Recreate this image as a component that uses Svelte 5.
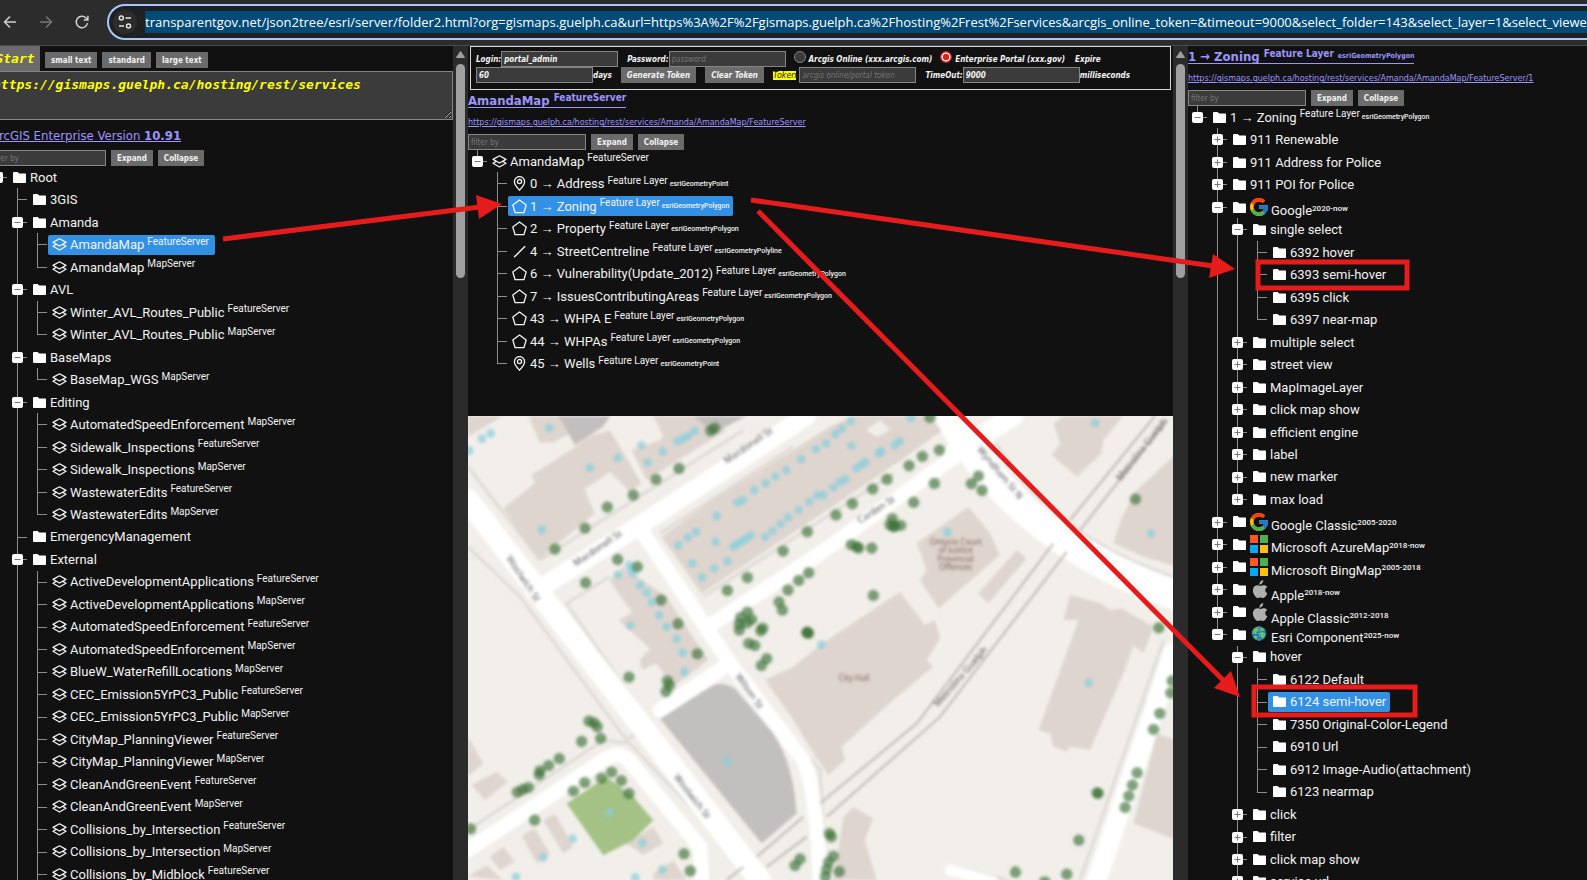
<script>
  const fs = (name) => ({ icon: 'layers', name, sup: 'FeatureServer' });
  const ms = (name) => ({ icon: 'layers', name, sup: 'MapServer' });
  const both = (name) => [fs(name), ms(name)];
  const folder = (name, children = null, closed = false, extra = {}) => ({ icon: 'folder', name, children, closed, ...extra });
  const shut = (name, extra = {}) => folder(name, null, true, extra);
  const layer = (icon, name, kind) => ({ icon, name, sup: 'Feature Layer', tiny: 'esriGeometry' + kind });

  const services = [
    folder('Root', [
      folder('3GIS'),
      folder('Amanda', [{ ...fs('AmandaMap'), selected: true }, ms('AmandaMap')]),
      folder('AVL', both('Winter_AVL_Routes_Public')),
      folder('BaseMaps', [ms('BaseMap_WGS')]),
      folder('Editing', [ms('AutomatedSpeedEnforcement'), ...both('Sidewalk_Inspections'), ...both('WastewaterEdits')]),
      folder('EmergencyManagement'),
      folder('External', [
        ...both('ActiveDevelopmentApplications'),
        ...both('AutomatedSpeedEnforcement'),
        ms('BlueW_WaterRefillLocations'),
        ...both('CEC_Emission5YrPC3_Public'),
        ...both('CityMap_PlanningViewer'),
        ...both('CleanAndGreenEvent'),
        ...both('Collisions_by_Intersection'),
        ...both('Collisions_by_Midblock')
      ]),
      shut('Planning')
    ])
  ];

  const layers = [
    {
      ...fs('AmandaMap'),
      children: [
        layer('pin', '0 → Address', 'Point'),
        { ...layer('polygon', '1 → Zoning', 'Polygon'), selected: true },
        layer('polygon', '2 → Property', 'Polygon'),
        layer('line', '4 → StreetCentreline', 'Polyline'),
        layer('polygon', '6 → Vulnerability(Update_2012)', 'Polygon'),
        layer('polygon', '7 → IssuesContributingAreas', 'Polygon'),
        layer('polygon', '43 → WHPA E', 'Polygon'),
        layer('polygon', '44 → WHPAs', 'Polygon'),
        layer('pin', '45 → Wells', 'Point')
      ]
    }
  ];

  const viewers = [
    folder('1 → Zoning', [
      shut('911 Renewable'),
      shut('911 Address for Police'),
      shut('911 POI for Police'),
      folder('Google', [
        folder('single select', [folder('6392 hover'), folder('6393 semi-hover'), folder('6395 click'), folder('6397 near-map')]),
        ...['multiple select', 'street view', 'MapImageLayer', 'click map show', 'efficient engine', 'label', 'new marker', 'max load'].map((n) => shut(n))
      ], false, { logo: 'google', years: '2020-now' }),
      shut('Google Classic', { logo: 'google', years: '2005-2020' }),
      shut('Microsoft AzureMap', { logo: 'microsoft', years: '2018-now' }),
      shut('Microsoft BingMap', { logo: 'microsoft', years: '2005-2018' }),
      shut('Apple', { logo: 'apple', years: '2018-now' }),
      shut('Apple Classic', { logo: 'apple', years: '2012-2018' }),
      folder('Esri Component', [
        folder('hover', [
          folder('6122 Default'),
          folder('6124 semi-hover', null, false, { selected: true }),
          folder('7350 Original-Color-Legend'),
          folder('6910 Url'),
          folder('6912 Image-Audio(attachment)'),
          folder('6123 nearmap')
        ]),
        shut('click'), shut('filter'), shut('click map show'), shut('service url')
      ], false, { logo: 'esri', years: '2025-now' })
    ], false, { sup: 'Feature Layer', tiny: 'esriGeometryPolygon' })
  ];

  let where = $state('enterprise');

  const trees = [
    [285,447],[375,384],[442,321],[520,285],[588,238],[657,205],[752,92],[764,84],[377,548],[473,478],[532,500],[603,600],[654,671],[712,761],[507,831],
    [622,842],[628,856],[618,874],[387,963],[402,968],[412,980],[422,1015],[365,1024],[298,1075],[266,1096],[240,1112],[238,1124],[205,1162],[188,1168],[172,1176],
    [340,1173],[374,1147],[424,1134],[455,1116],[484,1142],[507,1180],[224,1260],[32,1286],[672,1361],[691,1412],[1020,1376],[1005,1396],[802,571],[862,532],
    [969,453],[1042,395],[1046,518],[1016,541],[984,570],[957,606],[967,630],[862,636],[842,652],[875,658],[838,672],[838,690],[862,668],[908,684],[902,692],
    [866,730],[884,736],[920,776],[904,796],[1040,698],[1046,700],[1042,696],[1128,345],[1177,311],[1238,267],[1281,238],[1347,197],[1387,169],[1438,150],[1410,52],
    [1361,307],[1423,250],[1297,356],[1290,374],[1304,378],[1322,376],[1300,380],[1174,434],[1190,440],[1196,444],[1235,444],[1534,251],[1555,228],[1566,271],
    [1240,586],[2026,297],[2096,683],[2132,878],[2136,842],[2099,940],[2080,988],[2031,1118],[2017,1155],[2006,1188],[1995,1222],[1911,1178],[1914,1180],
    [1856,1320],[1820,1422],[1666,1416],[1754,1445],[1108,1300],[1114,1310],[1120,1368],[1106,1386],[1100,1408],[1096,1430],[1138,1414]
  ];
  const marks = [
    [66,116],[92,100],[28,152],[268,84],[390,203],[474,174],[563,187],[544,136],[608,154],[652,124],[668,116],[684,108],[704,93],[246,389],[474,524],[508,495],
    [514,508],[520,520],[540,556],[560,578],[576,606],[598,646],[620,680],[650,716],[668,758],[673,815],[511,676],[655,435],[683,412],[708,396],[770,348],[767,425],
    [697,489],[726,532],[762,505],[802,484],[820,440],[832,432],[846,424],[858,416],[872,406],[916,410],[938,392],[962,372],[984,352],[1016,330],[1048,305],[1072,286],
    [832,308],[848,300],[882,270],[917,250],[946,230],[978,210],[1023,177],[1068,148],[1098,130],[1126,102],[1146,86],[1172,64],[1174,137],[1090,284],[1120,262],
    [1140,246],[1156,238],[1190,204],[1204,194],[1216,186],[1256,160],[1264,154],[1304,136],[1318,124],[1462,397],[1905,68],[2072,400],[1886,848],[1084,734],
    [802,1084],[447,1238],[338,1316],[547,1328],[250,1372],[168,1430],[607,1408],[526,1432],[1352,54]
  ];
</script>

{#snippet glyph(name)}
  {#if name === 'folder'}
    <svg class="ico" viewBox="0 0 15 15" aria-hidden="true"><path d="M1 3.2C1 2.3 1.5 2 2.2 2H5.6L7.2 3.6H13c.7 0 1 .4 1 1V12c0 .7-.4 1-1 1H2.2C1.5 13 1 12.600 1 12Z" fill="#fff" /></svg>
  {:else if name === 'layers'}
    <svg class="ico" viewBox="0 0 15 15" aria-hidden="true"><path d="M7.500 1.800 14 5.400 7.500 9 1 5.400Z M3.800 7.600 1 9.300 7.500 13 14 9.300 11.200 7.600" fill="none" stroke="#f2f2f2" stroke-width="1.300" stroke-linejoin="round" /></svg>
  {:else if name === 'pin'}
    <svg class="ico" viewBox="0 0 15 15" aria-hidden="true"><path d="M7.500 14.200C5 11.400 2.400 8.700 2.400 5.700a5.100 5.100 0 0 1 10.200 0c0 3-2.600 5.700-5.100 8.500Z" fill="none" stroke="#f2f2f2" stroke-width="1.300" /><circle cx="7.500" cy="5.600" r="2.100" fill="none" stroke="#f2f2f2" stroke-width="1.300" /></svg>
  {:else if name === 'polygon'}
    <svg class="ico" viewBox="0 0 15 15" aria-hidden="true"><path d="M7.500 1 14.200 6 11.900 13.700H3.100L.8 6Z" fill="none" stroke="#f2f2f2" stroke-width="1.300" stroke-linejoin="round" /></svg>
  {:else}
    <svg class="ico" viewBox="0 0 15 15" aria-hidden="true"><path d="M2.500 12.800 12.800 2.500" stroke="#f2f2f2" stroke-width="1.400" stroke-linecap="round" /></svg>
  {/if}
{/snippet}

{#snippet brand(name)}
  {#if name === 'google'}
    <svg class="logo" viewBox="4 4 40 40" aria-hidden="true">
      <path fill="#ffc107" d="M43.611,20.083H42V20H24v8h11.303c-1.649,4.657-6.080,8-11.303,8c-6.627,0-12-5.373-12-12c0-6.627,5.373-12,12-12c3.059,0,5.842,1.154,7.961,3.039l5.657-5.657C34.046,6.053,29.268,4,24,4C12.955,4,4,12.955,4,24c0,11.045,8.955,20,20,20c11.045,0,20-8.955,20-20C44,22.659,43.862,21.350,43.611,20.083z" />
      <path fill="#ff3d00" d="M6.306,14.691l6.571,4.819C14.655,15.108,18.961,12,24,12c3.059,0,5.842,1.154,7.961,3.039l5.657-5.657C34.046,6.053,29.268,4,24,4C16.318,4,9.656,8.337,6.306,14.691z" />
      <path fill="#4caf50" d="M24,44c5.166,0,9.860-1.977,13.409-5.192l-6.190-5.238C29.211,35.091,26.715,36,24,36c-5.202,0-9.619-3.317-11.283-7.946l-6.522,5.025C9.505,39.556,16.227,44,24,44z" />
      <path fill="#1976d2" d="M43.611,20.083H42V20H24v8h11.303c-0.792,2.237-2.231,4.166-4.087,5.571l6.193,5.236C36.971,39.205,44,34,44,24C44,22.659,43.862,21.350,43.611,20.083z" />
    </svg>
  {:else if name === 'microsoft'}
    <svg class="logo" viewBox="0 0 18 18" aria-hidden="true"><path fill="#ff5722" d="M0 0h8v8H0z" /><path fill="#4caf50" d="M10 0h8v8h-8z" /><path fill="#03a9f4" d="M0 10h8v8H0z" /><path fill="#ffc107" d="M10 10h8v8h-8z" /></svg>
  {:else if name === 'apple'}
    <svg class="logo" viewBox="0 0 18 18" aria-hidden="true"><path fill="#b0b0b0" d="M13.200 0c.2 1.400-.4 2.500-1.100 3.300-.7.900-1.700 1.500-2.700 1.400-.2-1.300.4-2.400 1.100-3.200C11.200.7 12.300.1 13.200 0ZM17.400 13.200c-.5 1.100-.8 1.700-1.400 2.600-.8 1.200-1.700 2.200-2.900 2.200-1 0-1.300-.6-2.700-.6s-1.700.6-2.700.6c-1.200 0-2.100-1.100-2.900-2.300C2.600 13 2.300 9.500 3.600 7.500 4.500 6.100 6 5.200 7.400 5.200c1.300 0 2.200.7 3.300.7s1.700-.7 3.300-.7c1.200 0 2.500.6 3.300 1.700-3 1.700-2.500 5.300.1 6.300Z" /></svg>
  {:else}
    <svg class="logo" viewBox="0 0 18 18" aria-hidden="true">
      <circle cx="9" cy="8.500" r="7.300" fill="#1769a8" />
      <path fill="#58b947" d="M3.500 4.200 6 2.300l2.500-.4-.6 1.700 1 1.200-1.600 1.400-1 2.200-1.800-.4-1.500 1-.9-2Zm7-2 2.800.9 1.800 2.100-1.500.9-2-.6-1.200.4-.8-1.800Zm-.8 5.200 2.800-.5 2.300 1.300.7 2-1.800 3-1.900.6-.6-2.600-1.800-1.200ZM3.200 10.800l2.600.2 1.500 1.600-1 2.400-2-1.500Z" />
      <path fill="none" stroke="#8fd8f2" stroke-width=".4" d="M2 8.500h14M9 1.300v14.400M3.500 4.700c3.500 1.800 7.500 1.800 11 0M3.500 12.300c3.500-1.800 7.500-1.800 11 0M9 1.300c-4.600 4-4.600 10.400 0 14.400M9 1.300c4.600 4 4.600 10.400 0 14.400" />
    </svg>
  {/if}
{/snippet}

{#snippet branch(nodes, root)}
  <ul class:root>
    {#each nodes as node}
      <li>
        <div class="row">
          {#if node.children || node.closed}
            <button class="toggle" aria-label={(node.closed ? 'Open ' : 'Close ') + node.name}>
              <svg viewBox="0 0 11 11" aria-hidden="true"><path d={node.closed ? 'M2.500 5.500h6M5.500 2.500v6' : 'M2.500 5.500h6'} stroke="#777" stroke-width="1" /></svg>
            </button>
          {/if}
          <span class="label {node.logo ?? ''}" class:selected={node.selected}>
            {@render glyph(node.icon)}
            {#if node.logo}{@render brand(node.logo)}{/if}
            <span class="name">{node.name}</span>
            {#if node.sup}<span class="sup">{node.sup}</span>{/if}
            {#if node.tiny}<span class="tiny">{node.tiny}</span>{/if}
            {#if node.years}<span class="years">{node.years}</span>{/if}
          </span>
        </div>
        {#if node.children}{@render branch(node.children, false)}{/if}
      </li>
    {/each}
  </ul>
{/snippet}

{#snippet filter(id)}
  <div class="filter">
    <input id={id} aria-label="filter by" placeholder="filter by" />
    <button class="btn">Expand</button>
    <button class="btn">Collapse</button>
  </div>
{/snippet}

{#snippet scrollbar()}
  <div class="scrollbar" aria-hidden="true">
    <svg viewBox="0 0 9 7"><path d="M4.500 0.500 8.500 6.500H.5Z" fill="#9f9f9f" stroke="#9f9f9f" stroke-linejoin="round" /></svg>
    <div class="thumb"></div>
  </div>
{/snippet}

<div class="page">
  <header>
    <nav>
      <button aria-label="Back"><svg viewBox="0 0 16 16"><path d="M14 8H3M8 2.500 2.500 8 8 13.500" stroke="#d0d0d0" /></svg></button>
      <button aria-label="Forward"><svg viewBox="0 0 16 16"><path d="M2 8h11M8 2.500 13.500 8 8 13.500" stroke="#757575" /></svg></button>
      <button aria-label="Reload"><svg viewBox="0 0 16 16"><path d="M13.500 9.200A5.700 5.700 0 1 1 12 4l1.600 1.600M13.900 1.800v4.100H9.800" stroke="#d0d0d0" /></svg></button>
    </nav>
    <div class="omnibox">
      <button class="site" aria-label="Site information"><svg viewBox="0 0 16 16"><path d="M8.500 4H14M2 12h5" stroke="#e3e3e3" /><circle cx="4.300" cy="4" r="2" stroke="#e3e3e3" /><circle cx="11.500" cy="12" r="2" stroke="#e3e3e3" /></svg></button>
      <span class="url">transparentgov.net/json2tree/esri/server/folder2.html?org=gismaps.guelph.ca&amp;url=https%3A%2F%2Fgismaps.guelph.ca%2Fhosting%2Frest%2Fservices&amp;arcgis_online_token=&amp;timeout=9000&amp;select_folder=143&amp;select_layer=1&amp;select_viewer=6124</span>
    </div>
  </header>

  <main>
    <section class="pane">
      <div class="content left">
        <div class="sizes">
          <button class="start">Start</button>
          <button class="btn">small text</button>
          <button class="btn">standard</button>
          <button class="btn">large text</button>
        </div>
        <textarea aria-label="Server address" spellcheck="false">https://gismaps.guelph.ca/hosting/rest/services</textarea>
        <a class="version" href="#version">ArcGIS Enterprise Version <b>10.91</b></a>
        {@render filter('filter-services')}
        {@render branch(services, true)}
      </div>
      {@render scrollbar()}
    </section>

    <section class="pane">
      <div class="content middle">
        <form>
          <div class="line">
            <label for="login">Login:</label><input id="login" value="portal_admin" />
            <label class="gap" for="password">Password:</label><input id="password" type="password" placeholder="password" />
            <label class="choice"><input type="radio" value="online" bind:group={where} />Arcgis Online (xxx.arcgis.com)</label>
            <label class="choice"><input type="radio" value="enterprise" bind:group={where} />Enterprise Portal (xxx.gov)</label>
            <label class="expire" for="days">Expire</label>
          </div>
          <div class="line">
            <input id="days" value="60" /><span>days</span>
            <button class="btn gap" type="button">Generate Token</button>
            <button class="btn gap" type="button">Clear Token</button>
            <label class="gap token" for="token"><mark>Token</mark></label><input id="token" placeholder="arcgis online/portal token" />
            <label class="gap" for="timeout">TimeOut:</label><input id="timeout" value="9000" /><span>milliseconds</span>
          </div>
        </form>
        <a class="heading" href="#service"><span>AmandaMap</span> <span class="hsup">FeatureServer</span></a>
        <a class="address" href="#service-url">https://gismaps.guelph.ca/hosting/rest/services/Amanda/AmandaMap/FeatureServer</a>
        {@render filter('filter-layers')}
        {@render branch(layers, true)}
        <svg class="map" viewBox="24 48 2115 1392" preserveAspectRatio="xMidYMid slice" role="img" aria-label="Street map">
          <defs>
            <filter id="soft" x="0" y="0" width="1" height="1"><feGaussianBlur stdDeviation="5" /></filter>
            <filter id="dots" x="0" y="0" width="1" height="1"><feGaussianBlur stdDeviation="4" /></filter>
          </defs>
          <rect x="0" y="0" width="2200" height="1500" fill="#f2efea" />
          <g filter="url(#soft)">
            <g fill="#dfd5cf">
              <path d="M24 110 130 48H24ZM205 48h90l40 50-55 30h-40ZM130 325 225 250 215 225 340 145 385 110 450 90 545 250 510 275 450 215 375 270 405 340 235 480ZM515 150 600 120 580 48H710L740 70 800 90 560 240Z" />
              <path d="M605 410 760 300 1110 80 1180 48H1400L1450 90 1310 190 1080 345 725 580Z" />
              <path d="M450 540 490 500 620 590 745 780 640 860 590 790 545 810 540 780 570 745 475 660 510 640Z" />
              <path d="M1000 800 1080 735 1320 575 1395 675 1425 660 1440 715 1400 780 1420 800 1300 900 1145 1040 1155 1080 1105 1125 1060 1060 1000 960 915 840Z" />
              <path d="M1370 430 1525 320 1590 400 1620 465 1435 625 1380 540 1400 510ZM1555 580 1670 450 1700 475 1585 610Z" />
              <path d="M1775 165 1800 130 1780 70 1810 48H1990L1930 120 1925 160 1850 230ZM1960 430 1985 350 2030 270 2150 160V500L2050 470Z" />
              <path d="M1810 660 1830 585 1925 610 1950 630 1985 625 2080 680 2050 760 2020 735 1990 820 1890 1050 1830 1040 1820 1055 1780 1040 1770 1000 1735 990 1855 660Z" />
              <path d="M2090 1000 2150 1020V1320L2020 1270ZM1150 1250 1180 1220 1240 1255 1215 1320 1250 1440H1120Z" />
              <path d="M24 1010 70 1090 24 1130ZM35 1155 110 1115 145 1145 75 1200ZM185 1305 225 1285 270 1360 230 1390ZM250 1260 285 1240 340 1340 310 1360ZM90 1370 130 1340 165 1385 120 1410ZM24 1430 80 1395 130 1440ZM500 1330 580 1280 610 1330 550 1365ZM580 1420 640 1380 680 1440H580Z" />
            </g>
            <g fill="#c2c0be"><path d="M295 48H450L430 80 345 135ZM700 48H860L760 100ZM600 955 760 855Q790 845 825 865L940 1000Q1000 1090 1010 1240L905 1330Z" /></g>
            <g fill="#f2efea"><path d="M375 265 455 220 490 270 405 340ZM450 90 540 48H580L610 110 515 150ZM340 610 450 545 515 635 460 670ZM1220 90 1260 60 1290 90 1250 110Z" /></g>
            <path d="M320 1210 440 1130 520 1190 580 1260 520 1320 430 1365Z" fill="#a4c285" />
            <g fill="none" stroke="#dcd9d4" stroke-width="8">
              <path d="M24 200 240 480M24 440 180 590 500 1020 570 970 320 610 450 530M240 480 850 90M600 400 1000 140M730 590 1300 220M1520 180Q1640 370 2139 620M1610 130Q1760 400 2139 530M2110 720 1860 1440M2060 900 1930 1440M24 1290 430 1020 510 1030 900 1440M850 830 1080 1110 1100 1440M1480 1400 1640 1440" />
            </g>
            <g fill="none" stroke="#fff" stroke-linejoin="round" stroke-linecap="round">
              <path d="M24 300 900 1440" stroke-width="66" />
              <path d="M225 575 540 375 1040 48" stroke-width="56" />
              <path d="M540 385 810 790 1030 1080Q1070 1170 1080 1440M760 670 1080 460 1540 130M810 790 600 930M24 1350 440 1075Q480 1050 510 1085L720 1340 725 1440" stroke-width="44" />
              <path d="M1470 48Q1680 430 2160 590" stroke-width="90" />
              <path d="M1480 160 1660 48M2139 760 1910 1440" stroke-width="60" />
              <path d="M1470 1410 1600 1445" stroke-width="32" />
            </g>
            <g fill="none" stroke="#c2bfba" stroke-width="7">
              <path d="M1080 1210 1370 970 1780 430M1100 1250 1440 950 1820 455M1830 360 2085 48M1860 390 2120 60M890 1370 1030 1250M920 1400 1040 1310M800 1440 850 1400" />
            </g>
          </g>
          <g filter="url(#dots)">
            {#each marks as [x, y]}<circle cx={x} cy={y} r="13" fill="#86cfdb" opacity=".7" />{/each}
            {#each trees as [x, y]}<circle cx={x} cy={y} r="17" fill="#3c7038" opacity=".65" />{/each}
          </g>
          <g filter="url(#soft)">
            <g class="street">
              <text transform="translate(138 475) rotate(56)">Woolwich St</text>
              <text transform="translate(348 500) rotate(-34)">Macdonell St</text>
              <text transform="translate(800 192) rotate(-34)">Macdonell St</text>
              <text transform="translate(640 1132) rotate(52)">Woolwich St</text>
              <text transform="translate(825 830) rotate(54)">Wilson St</text>
              <text transform="translate(1200 372) rotate(-33)">Carden St</text>
              <text transform="translate(1550 150) rotate(50)">Wyndham St N</text>
              <text transform="translate(1434 922) rotate(-49)">Metrolinx Guelph</text>
              <text transform="translate(1982 244) rotate(-52)">Metrolinx Guelph</text>
            </g>
            <g class="place">
              <text x="1182" y="844">City Hall</text>
              <text x="1487" y="434">Ontario Court</text>
              <text x="1487" y="460">of Justice</text>
              <text x="1487" y="486">Provincial</text>
              <text x="1487" y="511">Offences</text>
            </g>
          </g>
        </svg>
      </div>
      {@render scrollbar()}
    </section>

    <section class="pane">
      <div class="content right">
        <a class="heading" href="#layer"><span>1 → Zoning</span> <span class="hsup">Feature Layer</span> <span class="htiny">esriGeometryPolygon</span></a>
        <a class="address" href="#layer-url">https://gismaps.guelph.ca/hosting/rest/services/Amanda/AmandaMap/FeatureServer/1</a>
        {@render filter('filter-viewers')}
        {@render branch(viewers, true)}
      </div>
    </section>
  </main>

  <svg class="notes" aria-hidden="true">
    <g fill="none" stroke="#e61c1c" stroke-width="5">
      <path d="M223 239 480 207M751 200 1213 266M758 211 1224 681" />
      <rect x="1258" y="262" width="149" height="26" />
      <rect x="1254" y="687" width="161" height="28" />
    </g>
    <path fill="#e61c1c" d="M502 204 476 195 479 219ZM1235 269 1213 254 1209 278ZM1240 697 1231 671 1214 688Z" />
  </svg>
</div>

<style>
  :global(body) { background: #111; }
  * { box-sizing: border-box; }
  .page { position: relative; height: 100vh; overflow: hidden; display: flex; flex-direction: column; background: #111; color: #f2f2f2; font-family: "DejaVu Sans Condensed", "DejaVu Sans", sans-serif; font-size: 8px; }
  button, input, textarea { font: inherit; color: inherit; margin: 0; border: 0; padding: 0; border-radius: 0; }
  button { background: none; cursor: pointer; }

  header { flex: none; height: 46px; display: flex; align-items: flex-start; padding-top: 4px; background: #2c2c2d; border-bottom: 1px solid #4b4b4b; }
  nav { flex: none; width: 107px; height: 36px; display: flex; align-items: center; gap: 20px; padding-left: 2px; }
  nav svg, .site svg { display: block; width: 16px; height: 16px; fill: none; stroke-width: 1.5; }
  .omnibox { flex: 1; min-width: 0; height: 36px; display: flex; align-items: center; gap: 8px; padding-left: 4px; border: 2px solid #a8c7fa; border-right: 0; border-radius: 18px 0 0 18px; background: #1f2022; overflow: hidden; }
  .site { flex: none; width: 24px; height: 24px; display: grid; place-items: center; border-radius: 50%; background: #2c2c2d; }
  .url { flex: 1; height: 22px; line-height: 22px; overflow: hidden; white-space: nowrap; background: #004a77; color: #fff; font-family: "Open Sans", sans-serif; font-size: 13px; }

  main { flex: 1; min-height: 0; display: grid; grid-template-columns: 468fr 720fr 399fr; }
  .pane { min-width: 0; min-height: 0; display: flex; overflow: hidden; }
  .content { flex: 1; min-width: 0; display: flex; flex-direction: column; overflow: hidden; }
  .content > * { flex: none; }
  .scrollbar { flex: none; width: 15px; display: flex; flex-direction: column; align-items: center; gap: 6px; padding-top: 5px; background: #2b2b2b; }
  .scrollbar svg { width: 9px; height: 7px; }
  .thumb { width: 9px; height: 214px; border-radius: 5px; background: #9f9f9f; }

  .btn { height: 16px; padding: 0 6px; background: #6b6b6b; color: #f2f2f2; font-weight: bold; white-space: nowrap; }
  input { width: 118px; height: 16px; padding: 0 2px; background: #3b3b3b; border: 1px solid #858585; }
  input::placeholder { color: #757575; opacity: 1; }
  a { color: #9c95ff; }

  .sizes { display: flex; align-items: flex-end; gap: 5px; height: 25px; }
  .sizes .btn { margin-bottom: 3px; }
  .start { width: 50px; height: 25px; margin-left: -10px; background: #6b6b6b; color: #ff0; font: italic bold 13px "DejaVu Sans Mono", monospace; }
  textarea { display: block; height: 49px; margin-left: -12px; padding: 5px 4px; background: #3b3b3b; border: 1px solid #858585; color: #ff0; font: italic bold 13px/16px "DejaVu Sans Mono", monospace; resize: vertical; }
  .version { height: 30px; line-height: 32px; margin-left: -9px; font-size: 13px; white-space: nowrap; }
  .filter { display: flex; gap: 5px; height: 16px; }
  .left .filter, .left .root { margin-left: -12px; }

  form { height: 44px; margin: 0 2px; padding: 4px 5px; border: 1px solid #d8d8d8; font-style: italic; font-weight: bold; white-space: nowrap; }
  .line { display: flex; align-items: center; height: 16px; }
  .line input { width: 117px; flex: none; }
  .line input::placeholder { font-weight: normal; }
  .gap { margin-left: 9px; }
  .token { margin-right: 3px; }
  .line .choice { display: flex; align-items: center; gap: 3px; margin-left: 8px; }
  .line .choice input { appearance: none; width: 12px; height: 12px; padding: 0; border: 1px solid #858585; border-radius: 50%; margin-bottom: 4px; }
  .line .choice input:checked { background: radial-gradient(circle, #e61c1c 3px, #fff 3px, #fff 4px, #e61c1c 5px); border-color: #e61c1c; }
  .expire { margin-left: 10px; }
  mark { background: #ff0; color: #222; font-family: "DejaVu Sans", sans-serif; font-weight: normal; }

  .heading { align-self: flex-start; height: 18px; margin-bottom: 2px; display: flex; gap: 4px; border-bottom: 1px solid #9c95ff; line-height: 22px; font-size: 13px; font-weight: bold; text-decoration: none; white-space: nowrap; }
  .hsup { font-size: 10px; line-height: 16px; }
  .htiny { font-size: 7px; line-height: 21px; }
  .address { height: 24px; line-height: 26px; font-family: "DejaVu Sans", sans-serif; font-size: 8px; white-space: nowrap; }

  ul { margin: 0; padding: 0 0 0 20px; list-style: none; font-family: Roboto, sans-serif; font-size: 13px; line-height: 1.73; }
  ul.root { padding: 0; }
  li { position: relative; }
  li::before { content: ""; position: absolute; left: 9px; top: 0; width: 1px; height: 100%; background: #8e8e8e; }
  li:last-child::before { height: 11px; }
  li::after { content: ""; position: absolute; left: 9px; top: 11px; width: 10px; height: 1px; background: #8e8e8e; }
  .row { display: flex; align-items: center; height: 1.73em; padding-left: 20px; }
  .toggle { position: absolute; left: 4px; top: 6px; z-index: 1; width: 11px; height: 11px; border-radius: 2px; background: #fff; }
  .toggle svg { display: block; width: 11px; height: 11px; }
  .label { display: flex; align-items: center; height: 20px; padding: 0 4px; border-radius: 2px; white-space: nowrap; line-height: 20px; }
  .name { padding-top: 1px; }
  .selected { background: #3391e5; }
  .ico { flex: none; width: 15px; height: 15px; margin-right: 3px; }
  .logo { flex: none; width: 18px; height: 18px; margin-right: 3px; }
  .sup { margin: 0 2px 7px 3px; font-size: 10px; line-height: 13px; }
  .tiny { font-size: 7px; font-weight: 500; line-height: 20px; }
  .years { font-size: 8px; font-weight: 500; line-height: 16px; }
  .google .name, .microsoft .name, .esri .name { padding-top: 8px; }
  .apple .name { padding-top: 14px; }
  .apple .years { padding-top: 8px; }
  .google .years, .microsoft .years, .esri .years { padding-top: 3px; }

  .middle .map { flex: 1; display: block; width: 100%; min-height: 0; margin-top: 41px; }
  .street text { font: 28px "Noto Sans", sans-serif; fill: #555; }
  .place text { font: 24px "Noto Sans", sans-serif; fill: #7d6255; text-anchor: middle; }
  .notes { position: absolute; left: 0; top: 0; width: 100%; height: 100%; overflow: visible; pointer-events: none; z-index: 2; }
</style>
